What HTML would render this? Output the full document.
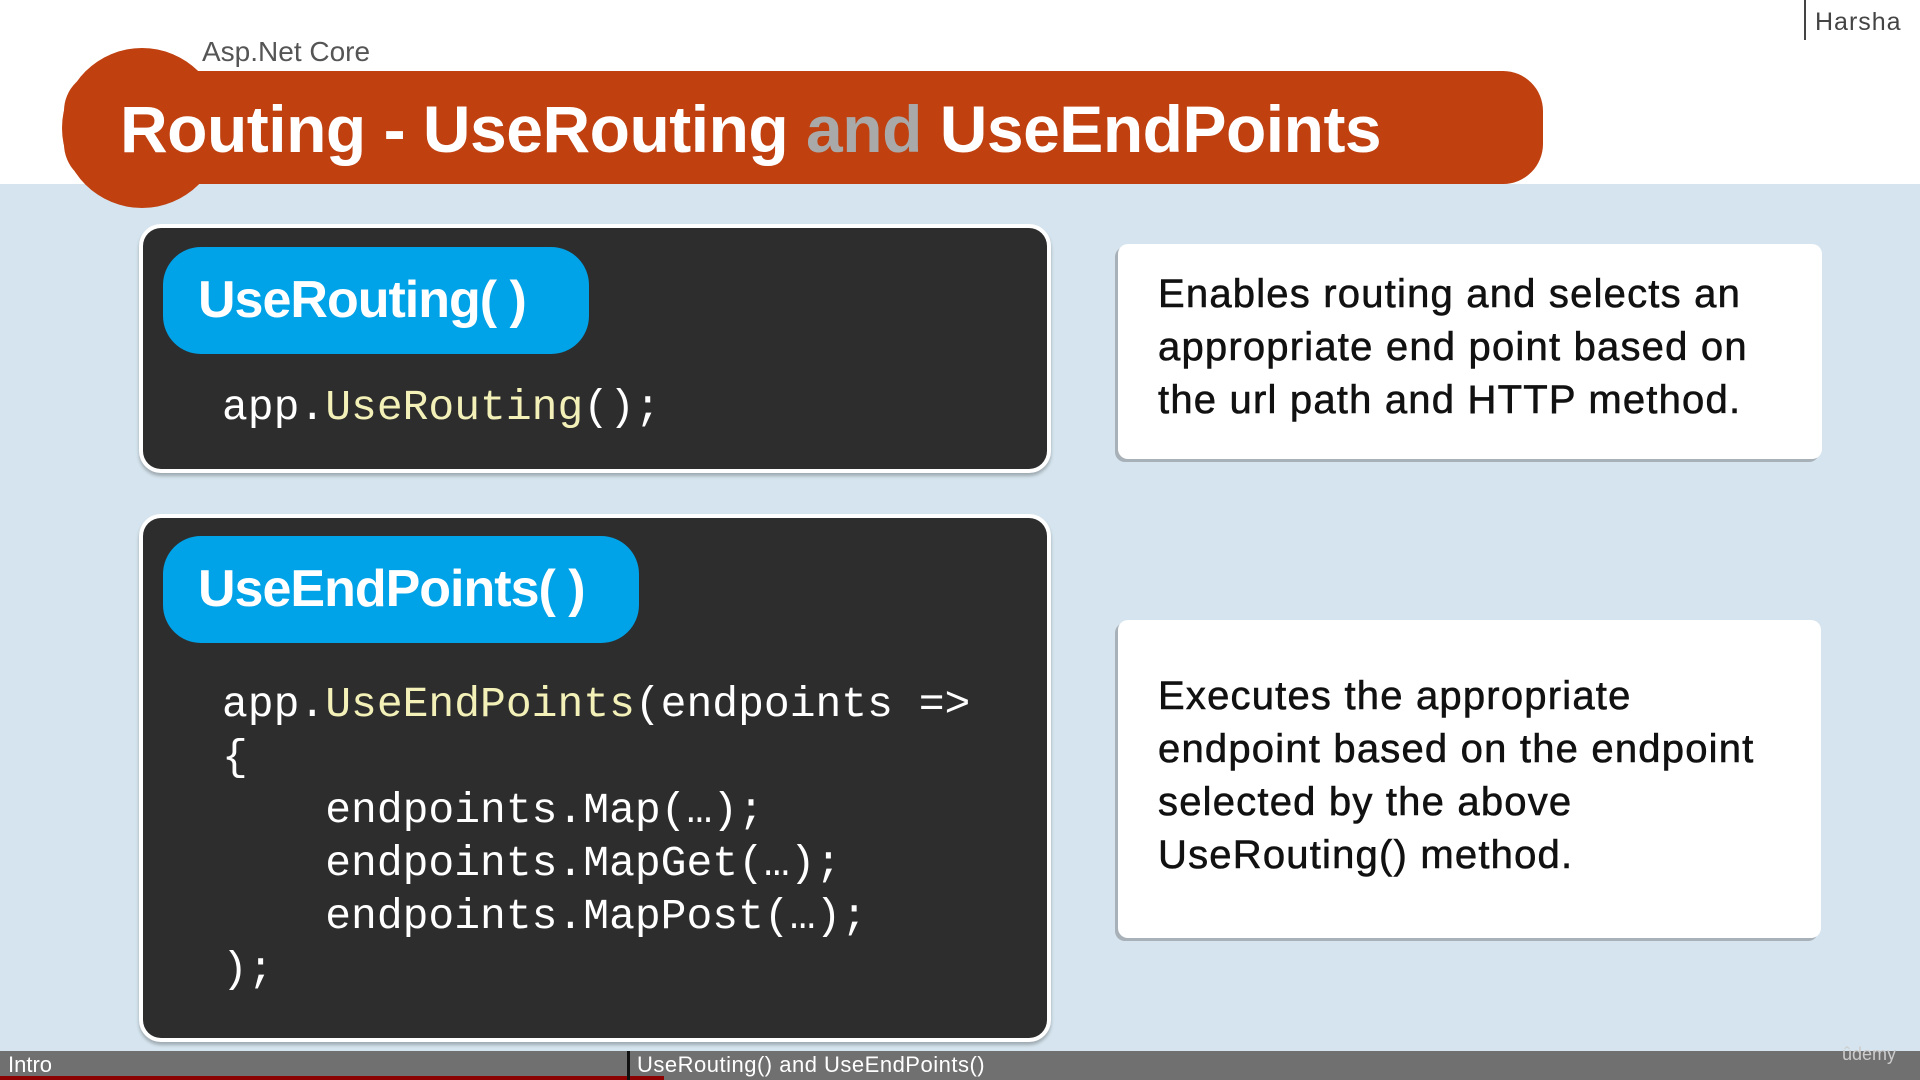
<!DOCTYPE html>
<html><head><meta charset="utf-8"><style>
*{margin:0;padding:0;box-sizing:border-box}
body{width:1920px;height:1080px;overflow:hidden;background:#d5e4ee;font-family:"Liberation Sans",sans-serif;position:relative}
.hdr{position:absolute;left:0;top:0;width:1920px;height:184px;background:#fff}
.abs{position:absolute}
.dark{position:absolute;background:#2d2d2d;border-radius:18px;box-shadow:0 0 0 4px #fff,0 3px 3px 4px rgba(0,0,0,.25)}
.pill{position:absolute;background:#00a2e8;border-radius:38px;color:#fff;font-size:52px;font-weight:bold;padding-left:35px;line-height:107px;letter-spacing:-1px}
.code{position:absolute;font-family:"Liberation Mono",monospace;font-size:43px;color:#fff;line-height:53px;white-space:pre}
.y{color:#f3f1b8}
.wbox{position:absolute;background:#fff;border-radius:10px;box-shadow:-3px 3px 0 #a8b0b8;font-size:40px;line-height:53px;color:#111;padding-left:40px;letter-spacing:1.2px;-webkit-text-stroke:0.6px #111}
</style></head><body>
<div class="hdr"></div>
<div class="abs" style="left:1804px;top:0;width:2px;height:40px;background:#444"></div>
<div class="abs" style="left:1815px;top:8px;font-size:25px;color:#444;letter-spacing:1px">Harsha</div>
<div class="abs" style="left:202px;top:36px;font-size:28px;color:#555">Asp.Net Core</div>
<div class="abs" style="left:64px;top:71px;width:1479px;height:113px;background:#c0400f;border-radius:40px"></div>
<div class="abs" style="left:62px;top:48px;width:160px;height:160px;background:#c0400f;border-radius:50%"></div>
<div class="abs" style="left:120px;top:91px;font-size:66px;font-weight:bold;color:#fff;letter-spacing:-0.5px;white-space:nowrap">Routing - UseRouting <span style="color:#a9a9a9">and</span> UseEndPoints</div>

<div class="dark" style="left:143px;top:228px;width:904px;height:241px"></div>
<div class="pill" style="left:163px;top:247px;width:426px;height:107px">UseRouting( )</div>
<div class="code" style="left:222px;top:381px">app.<span class="y">UseRouting</span>();</div>

<div class="dark" style="left:143px;top:518px;width:904px;height:520px"></div>
<div class="pill" style="left:163px;top:536px;width:476px;height:107px">UseEndPoints( )</div>
<div class="code" style="left:222px;top:678px">app.<span class="y">UseEndPoints</span>(endpoints =>
{
    endpoints.Map(…);
    endpoints.MapGet(…);
    endpoints.MapPost(…);
);</div>

<div class="wbox" style="left:1118px;top:244px;width:704px;height:215px;padding-top:24px">Enables routing and selects an<br>appropriate end point based on<br>the url path and HTTP method.</div>
<div class="wbox" style="left:1118px;top:620px;width:703px;height:318px;padding-top:50px">Executes the appropriate<br>endpoint based on the endpoint<br>selected by the above<br>UseRouting() method.</div>

<div class="abs" style="left:0;top:1051px;width:1920px;height:29px;background:#707070"></div>
<div class="abs" style="left:0;top:1076px;width:664px;height:4px;background:#8b0000"></div>
<div class="abs" style="left:627px;top:1051px;width:3px;height:29px;background:#111"></div>
<div class="abs" style="left:8px;top:1052px;font-size:22px;color:#fff">Intro</div>
<div class="abs" style="left:637px;top:1052px;font-size:22px;color:#fff;letter-spacing:0.5px">UseRouting() and UseEndPoints()</div>
<div class="abs" style="left:1842px;top:1044px;font-size:18px;color:#ccc">ûdemy</div>
</body></html>
